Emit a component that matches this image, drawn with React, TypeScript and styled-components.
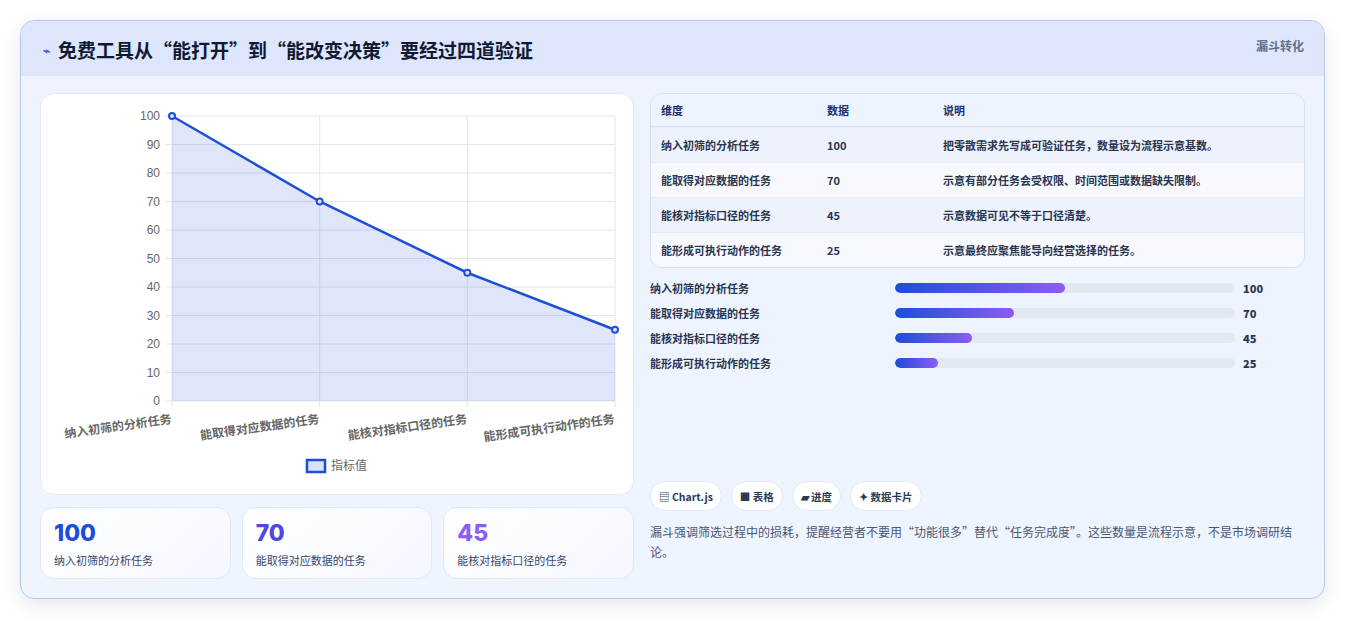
import React from 'react';
import styled, {createGlobalStyle} from 'styled-components';

const rows = [
    {name: '纳入初筛的分析任务', value: 100, desc: '把零散需求先写成可验证任务，数量设为流程示意基数。'},
    {name: '能取得对应数据的任务', value: 70, desc: '示意有部分任务会受权限、时间范围或数据缺失限制。'},
    {name: '能核对指标口径的任务', value: 45, desc: '示意数据可见不等于口径清楚。'},
    {name: '能形成可执行动作的任务', value: 25, desc: '示意最终应聚焦能导向经营选择的任务。'},
];

const Global = createGlobalStyle`
  body {
    margin: 0;
    background: #fff;
    font-family: "Noto Sans CJK SC", "Noto Sans", sans-serif;
  }
`;

const Page = styled.div`
  padding: 20px 20px;
`;

const Card = styled.div`
  border: 1px solid #b8c6ea;
  border-radius: 14px;
  background: linear-gradient(180deg, #eef3ff 0%, #eef5ff 100%);
  box-shadow: 0 6px 18px rgba(40, 60, 120, 0.12);
  overflow: hidden;
  height: 579px;
  box-sizing: border-box;
`;

const Header = styled.div`
  height: 55px;
  background: #dde6fd;
  display: flex;
  justify-content: space-between;
  padding: 0 20px 0 22px;
`;

const Title = styled.h1`
  margin: 0;
  font-size: 19px;
  font-weight: 700;
  color: #111a33;
  display: flex;
  align-items: center;
  gap: 8px;
  height: 56px;
  span { color: #3b5bdb; font-size: 12px; }
`;

const Tag = styled.div`
  font-size: 12px;
  color: #64708a;
  font-weight: 700;
  padding-top: 16px;
`;

const Body = styled.div`
  display: grid;
  grid-template-columns: 594px 1fr;
  gap: 16px;
  padding: 17px 19px 0 19px;
`;

const Col = styled.div`
  display: flex;
  flex-direction: column;
`;

const ChartBox = styled.div`
  background: #fff;
  border: 1px solid #e3e9f6;
  border-radius: 14px;
  height: 402px;
  box-sizing: border-box;
`;

const Kpis = styled.div`
  display: grid;
  grid-template-columns: repeat(3, 1fr);
  gap: 11px;
  margin-top: 12px;
`;

const Kpi = styled.div`
  background: linear-gradient(135deg, #ffffff, #f4f7ff);
  border: 1px solid #e1e8f6;
  border-radius: 14px;
  height: 72px;
  box-sizing: border-box;
  padding: 10px 13px;
`;

const KpiNum = styled.div<{$c: string}>`
  font-size: 23px;
  font-weight: 800;
  color: ${p => p.$c};
  line-height: 30px;
  font-family: "Inter", "Noto Sans", sans-serif;
`;

const KpiLabel = styled.div`
  font-size: 11px;
  color: #394566;
  margin-top: 4px;
`;

const Table = styled.table`
  width: 100%;
  border-collapse: separate;
  border-spacing: 0;
  border: 1px solid #d6dff0;
  border-radius: 12px;
  overflow: hidden;
  font-size: 11px;
  font-weight: 600;
  color: #2a3550;
  th {
    text-align: left;
    color: #1c2f6e;
    background: #eef4ff;
    height: 32px;
    padding: 0 10px;
    border-bottom: 1px solid #d6dff0;
  }
  td {
    height: 34px;
    padding: 0 10px;
    border-top: 1px solid #e6ecf6;
  }
  tr:nth-child(odd) td { background: #edf2fd; }
  tr:nth-child(even) td { background: #f7f9fe; }
`;

const Bars = styled.div`
  display: flex;
  flex-direction: column;
  gap: 7px;
  margin-top: 11px;
`;

const BarRow = styled.div`
  display: grid;
  grid-template-columns: 237px 340px 1fr;
  gap: 8px;
  align-items: center;
  font-size: 11px;
  font-weight: 600;
  color: #2a3550;
  height: 18px;
`;

const Track = styled.div`
  height: 10px;
  border-radius: 6px;
  background: #e3e7f0;
  overflow: hidden;
`;

const Fill = styled.div`
  height: 100%;
  border-radius: 6px;
  background: linear-gradient(90deg, #1d4ed8, #8b5cf6);
`;

const Chips = styled.div`
  display: flex;
  gap: 9px;
  margin-top: auto;
`;

const Chip = styled.div`
  background: #fff;
  border: 1px solid #e2e8f4;
  border-radius: 16px;
  height: 28px;
  padding: 0 8px;
  display: flex;
  align-items: center;
  gap: 3px;
  font-size: 10.5px;
  font-weight: 700;
  color: #2d3a56;
`;

const Note = styled.p`
  margin: 11px 0 17px;
  font-size: 12px;
  line-height: 20px;
  color: #4b5672;
`;

const Chart = () => {
    const x0 = 131, x1 = 574, y0 = 307, y1 = 22;
    const xs = rows.map((_, i) => x0 + (x1 - x0) * i / 3);
    const yOf = (v: number) => y0 - (y0 - y1) * v / 100;
    const pts = rows.map((r, i) => `${xs[i]},${yOf(r.value)}`).join(' ');
    return <svg width="592" height="400" style={{display: 'block'}} fontFamily='"Liberation Sans", "Noto Sans CJK SC", sans-serif'>
        {Array.from({length: 11}, (_, k) => {
            const y = yOf(k * 10);
            return <g key={k}>
                <line x1={x0 - 6} x2={x1} y1={y} y2={y} stroke="#e3e6ec"/>
                <text x={119} y={y + 4} fontSize="12" fill="#666" textAnchor="end">{k * 10}</text>
            </g>;
        })}
        {xs.map((x, i) => <line key={i} x1={x} x2={x} y1={y1} y2={y0 + 6} stroke="#e3e6ec"/>)}
        <polygon points={`${x0},${y0} ${pts} ${x1},${y0}`} fill="rgba(29,78,216,0.14)"/>
        <polyline points={pts} fill="none" stroke="#1d4ed8" strokeWidth="2.5"/>
        {rows.map((r, i) => <circle key={i} cx={xs[i]} cy={yOf(r.value)} r="3" fill="#dbe3fb" stroke="#1d4ed8" strokeWidth="2"/>)}
        {rows.map((r, i) => <text key={i} x={xs[i]} y={y0 + 22} fontSize="12" fontWeight="700" fill="#666"
                                   textAnchor="end" transform={`rotate(-8 ${xs[i]} ${y0 + 22})`}
                                   fontFamily='"Noto Sans CJK SC", sans-serif'>{r.name}</text>)}
        <rect x={266} y={366} width={18} height={12} fill="#dbe3fb" stroke="#1d4ed8" strokeWidth="2.5"/>
        <text x={290} y={376} fontSize="12" fill="#666" fontFamily='"Noto Sans CJK SC", sans-serif'>指标值</text>
    </svg>;
};

export default function App() {
    const colors = ['#1d4ed8', '#4f46e5', '#8b5cf6'];
    return <Page>
        <Global/>
        <Card>
            <Header>
                <Title><span>⌁</span>免费工具从“能打开”到“能改变决策”要经过四道验证</Title>
                <Tag>漏斗转化</Tag>
            </Header>
            <Body>
                <Col>
                    <ChartBox><Chart/></ChartBox>
                    <Kpis>
                        {rows.slice(0, 3).map((r, i) => <Kpi key={r.name}>
                            <KpiNum $c={colors[i]}>{r.value}</KpiNum>
                            <KpiLabel>{r.name}</KpiLabel>
                        </Kpi>)}
                    </Kpis>
                </Col>
                <Col>
                    <Table>
                        <thead>
                        <tr><th style={{width: 146}}>维度</th><th style={{width: 96}}>数据</th><th>说明</th></tr>
                        </thead>
                        <tbody>
                        {rows.map(r => <tr key={r.name}><td>{r.name}</td><td>{r.value}</td><td>{r.desc}</td></tr>)}
                        </tbody>
                    </Table>
                    <Bars>
                        {rows.map(r => <BarRow key={r.name}>
                            <span>{r.name}</span>
                            <Track><Fill style={{width: `${r.value / 2}%`}}/></Track>
                            <b>{r.value}</b>
                        </BarRow>)}
                    </Bars>
                    <Chips>
                        <Chip>▤ Chart.js</Chip>
                        <Chip>■ 表格</Chip>
                        <Chip>▰ 进度</Chip>
                        <Chip>✦ 数据卡片</Chip>
                    </Chips>
                    <Note>漏斗强调筛选过程中的损耗，提醒经营者不要用“功能很多”替代“任务完成度”。这些数量是流程示意，不是市场调研结论。</Note>
                </Col>
            </Body>
        </Card>
    </Page>;
}
